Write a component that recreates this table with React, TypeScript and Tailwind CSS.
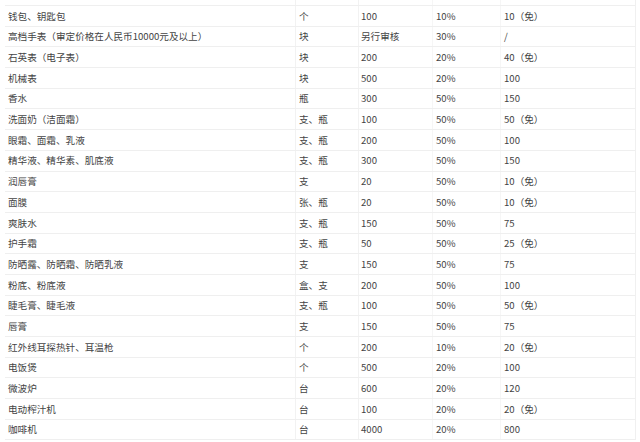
const rows: [string, string, string, string, string][] = [
  ["钱包、钥匙包", "个", "100", "10%", "10（免）"],
  ["高档手表（审定价格在人民币10000元及以上）", "块", "另行审核", "30%", "/"],
  ["石英表（电子表）", "块", "200", "20%", "40（免）"],
  ["机械表", "块", "500", "20%", "100"],
  ["香水", "瓶", "300", "50%", "150"],
  ["洗面奶（洁面霜）", "支、瓶", "100", "50%", "50（免）"],
  ["眼霜、面霜、乳液", "支、瓶", "200", "50%", "100"],
  ["精华液、精华素、肌底液", "支、瓶", "300", "50%", "150"],
  ["润唇膏", "支", "20", "50%", "10（免）"],
  ["面膜", "张、瓶", "20", "50%", "10（免）"],
  ["爽肤水", "支、瓶", "150", "50%", "75"],
  ["护手霜", "支、瓶", "50", "50%", "25（免）"],
  ["防晒露、防晒霜、防晒乳液", "支", "150", "50%", "75"],
  ["粉底、粉底液", "盒、支", "200", "50%", "100"],
  ["睫毛膏、睫毛液", "支、瓶", "100", "50%", "50（免）"],
  ["唇膏", "支", "150", "50%", "75"],
  ["红外线耳探热针、耳温枪", "个", "200", "10%", "20（免）"],
  ["电饭煲", "个", "500", "20%", "100"],
  ["微波炉", "台", "600", "20%", "120"],
  ["电动榨汁机", "台", "100", "20%", "20（免）"],
  ["咖啡机", "台", "4000", "20%", "800"],
];

const cols = "grid grid-cols-[290px_63px_74px_68px_136px]";

export default function App() {
  return (
    <div
      className="w-[640px] h-[442px] overflow-hidden bg-white text-[9.6px] text-[#444444]"
      style={{ fontFamily: '"Noto Sans CJK SC", "Noto Sans", sans-serif' }}
    >
      <div className="ml-[5px] w-[631px] border-r border-[#f0f0f0]">
        <div className={`${cols} h-[6px] border-b border-[#efefef]`}>
          <div />
          <div className="border-l border-[#f2f2f2]" />
          <div className="border-l border-[#f2f2f2]" />
          <div className="border-l border-[#f6f6f6]" />
          <div className="border-l border-[#f6f6f6]" />
        </div>
        {rows.map((r, i) => (
          <div key={i} className={`${cols} h-[20.7px] border-b border-[#efefef]`}>
            <div className="flex items-center pl-[3px] whitespace-nowrap">{r[0]}</div>
            <div className="flex items-center pl-[3px] border-l border-[#f2f2f2]">{r[1]}</div>
            <div className="flex items-center pl-[2px] border-l border-[#f2f2f2]">{r[2]}</div>
            <div className="flex items-center pl-[3px] border-l border-[#f6f6f6]">{r[3]}</div>
            <div className="flex items-center pl-[3px] border-l border-[#f6f6f6]">{r[4]}</div>
          </div>
        ))}
      </div>
    </div>
  );
}
